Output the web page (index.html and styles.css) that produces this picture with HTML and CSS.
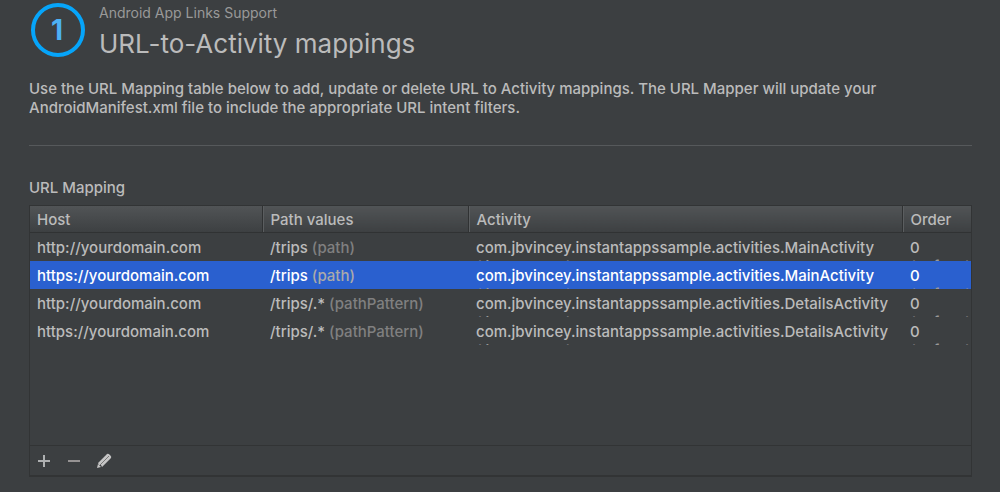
FILE: index.html
```html
<!DOCTYPE html>
<html lang="en">
<head>
<meta charset="utf-8">
<title>Android App Links Support</title>
<link rel="stylesheet" href="styles.css">
</head>
<body>
<main class="page">
  <header class="header">
    <svg class="step" viewBox="0 0 56 56" role="img" aria-label="Step 1">
      <circle cx="29" cy="28" r="25" fill="none" stroke="#06a5fa" stroke-width="4"/>
      <text class="step-number" x="28" y="38" text-anchor="middle">1</text>
    </svg>
    <div class="titles">
      <p class="eyebrow">Android App Links Support</p>
      <h1 class="title">URL-to-Activity mappings</h1>
    </div>
  </header>
  <p class="intro">Use the URL Mapping table below to add, update or delete URL to Activity mappings. The URL Mapper will update your AndroidManifest.xml file to include the appropriate URL intent filters.</p>
  <hr class="divider">
  <h2 class="label" id="mapping-label">URL Mapping</h2>
  <section class="panel">
    <div class="table-area">
      <table class="mappings" aria-labelledby="mapping-label">
        <colgroup><col class="col-host"><col class="col-path"><col class="col-activity"><col class="col-order"></colgroup>
        <thead>
          <tr><th>Host</th><th>Path values</th><th>Activity</th><th>Order</th></tr>
        </thead>
        <tbody>
          <tr><td>http://yourdomain.com</td><td>/trips <span class="kind">(path)</span></td><td><div class="cell">com.jbvincey.instantappssample.activities.MainActivity <span class="note">(line number)</span></div></td><td><div class="cell">0 <span class="note">(default)</span></div></td></tr>
          <tr class="selected"><td>https://yourdomain.com</td><td>/trips <span class="kind">(path)</span></td><td><div class="cell">com.jbvincey.instantappssample.activities.MainActivity <span class="note">(line number)</span></div></td><td><div class="cell">0 <span class="note">(default)</span></div></td></tr>
          <tr><td>http://yourdomain.com</td><td>/trips/.* <span class="kind">(pathPattern)</span></td><td><div class="cell">com.jbvincey.instantappssample.activities.DetailsActivity <span class="note">(line number)</span></div></td><td><div class="cell">0 <span class="note">(default)</span></div></td></tr>
          <tr><td>https://yourdomain.com</td><td>/trips/.* <span class="kind">(pathPattern)</span></td><td><div class="cell">com.jbvincey.instantappssample.activities.DetailsActivity <span class="note">(line number)</span></div></td><td><div class="cell">0 <span class="note">(default)</span></div></td></tr>
        </tbody>
      </table>
    </div>
    <div class="toolbar">
      <button class="tool" type="button" aria-label="Add"><svg viewBox="0 0 16 16"><path d="M8 2v12M2 8h12" stroke="#aeb0b1" stroke-width="2"/></svg></button>
      <button class="tool" type="button" aria-label="Remove"><svg viewBox="0 0 16 16"><path d="M2 8h12" stroke="#969393" stroke-width="2"/></svg></button>
      <button class="tool" type="button" aria-label="Edit"><svg viewBox="0 0 16 16"><path d="M1 15l1-4 3 3z" fill="#c5c5c5"/><path d="M2 10l9-9q1-1 3 1t1 3l-9 9-1-2-2 0z" fill="#c5c5c5"/><path d="M4 12l9-9" stroke="#777" stroke-width="1"/></svg></button>
    </div>
  </section>
</main>
</body>
</html>
```
FILE: styles.css
```css
* { box-sizing: border-box; }
body {
  margin: 0;
  background: #3c3f41;
  color: #bbbbbb;
  font-family: Inter, "Open Sans", sans-serif;
  font-size: 15px;
  font-weight: 500;
  line-height: 19px;
}
.page { padding: 2px 28px 15px 29px; }
.header { display: flex; gap: 14px; }
.step { width: 56px; height: 56px; flex: none; }
.step-number { font: bold 28px Inter, sans-serif; fill: #4db1f5; }
.titles { display: flex; flex-direction: column; gap: 6px; padding-top: 1px; }
.eyebrow { margin: 0; font-size: 14px; font-weight: 400; color: #999999; }
.title { margin: 0; font-size: 26px; line-height: 32px; font-weight: 400; }
.intro { margin: 19px 0 28px; }
.divider { margin: 0; border: 0; border-top: 1px solid #56595b; }
.label { margin: 32px 0 8px; font-size: 15px; font-weight: 500; }
.panel { border: 1px solid #323435; border-bottom-width: 2px; }
.table-area { min-height: 239px; }
.mappings { width: 100%; table-layout: fixed; border-collapse: collapse; }
.col-host { width: 232px; }
.col-path { width: 206px; }
.col-order { width: 69px; }
th {
  height: 26px;
  padding: 2px 8px 0;
  text-align: left;
  font-weight: 500;
  background: linear-gradient(#515456, #3d4042);
  border-bottom: 1px solid #303233;
}
th + th { border-left: 1px solid #303233; box-shadow: inset 1px 0 #5b5e60; }
td { height: 28px; padding: 2px 8px 0; white-space: nowrap; vertical-align: top; line-height: 26px; }
th:first-child, td:first-child { padding-left: 7px; }
td:last-child { padding-right: 0; }
.cell { height: 26px; overflow: hidden; padding-top: 3px; line-height: 19px; }
.note { display: block; color: #999999; }
.kind { color: #808080; }
.selected { background: #2a60cf; color: #ffffff; }
.selected .kind { color: #aaaaaa; }
.toolbar { display: flex; gap: 14px; height: 30px; align-items: center; padding-left: 6px; border-top: 1px solid #323435; }
.tool { width: 16px; height: 16px; padding: 0; border: 0; background: none; }
.tool svg { display: block; width: 16px; height: 16px; }
```
